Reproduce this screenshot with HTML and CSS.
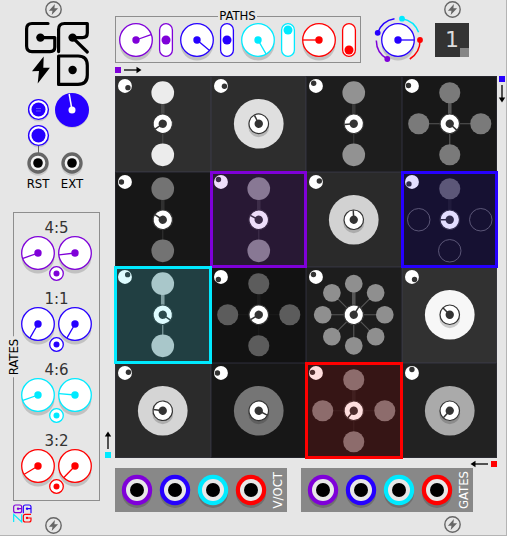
FILE: index.html
```html
<!DOCTYPE html>
<html lang="en">
<head>
<meta charset="utf-8">
<meta name="viewport" content="width=device-width, initial-scale=1">
<title>GRD</title>
<link rel="stylesheet" href="styles.css">
</head>
<body>
<svg class="defs" aria-hidden="true">
  <symbol id="screw" viewBox="-8.5 -8.5 17 17">
    <circle r="7.7" fill="none" stroke="#666" stroke-width="1.4"/>
    <path d="M1.4-5.6-4.6 1.2H-1L-1.8 5.6 4.6-1.2H.9Z" fill="#666"/>
  </symbol>
  <symbol id="dial-face" viewBox="-17 -17 34 34" overflow="visible">
    <circle cy="4" r="16.5" fill="#000" fill-opacity=".16"/>
    <circle r="16.3" fill="#fff" stroke="currentColor" stroke-width="1.3"/>
    <circle r="3.7" fill="currentColor"/>
  </symbol>
  <g id="needle"><path d="M0 0V-16" stroke="currentColor" stroke-width="1.3"/></g>
  <g id="flow"><path d="M0 1H6V7H0Z" fill="currentColor"/><path d="M9 4H23" stroke="#000" stroke-width="1.3"/><path d="M21.500 .8 26.500 4 21.500 7.200Z" fill="#000"/></g>
  <symbol id="jack" viewBox="-15 -15 30 30" overflow="visible">
    <circle cy="3" r="15" fill="#000" fill-opacity=".18"/>
    <circle r="15.2" fill="currentColor"/>
    <circle r="11" fill="#e8e8e8"/>
    <circle r="7" fill="#000"/>
  </symbol>
  <symbol id="input-jack" viewBox="-11 -11 22 22" overflow="visible">
    <circle cy="2" r="10.7" fill="#000" fill-opacity=".12"/>
    <circle r="9" fill="#f4f4f4" stroke="#666" stroke-width="3.300"/>
    <circle r="4.800" fill="#000"/>
  </symbol>
  <symbol id="push" viewBox="-10.5 -10.5 21 21" overflow="visible">
    <circle cy="1.500" r="10.500" fill="#000" fill-opacity=".12"/>
    <circle r="9.900" fill="#fff" stroke="currentColor" stroke-width="1.400"/>
    <circle r="7" fill="currentColor"/>
  </symbol>
  <symbol id="trim" viewBox="-7.5 -7.5 15 15" overflow="visible">
    <circle r="6.800" fill="#fff" stroke="currentColor" stroke-width="1.300"/>
    <circle r="3" fill="currentColor"/>
  </symbol>
  <g id="pair">
    <path class="link-wide" d="M0 0V-31"/><path class="link" d="M0 0V31"/>
    <g fill="currentColor"><circle cy="-31.200" r="11.400"/><circle cy="31.200" r="11.400"/></g>
  </g>
  <g id="quad">
    <path class="link-wide" d="M0 0V-31"/><path class="link" d="M-31 0H31M0 0V31"/>
    <g fill="currentColor"><circle cy="-31.200" r="10.600"/><circle cy="31.200" r="10.600"/><circle cx="-31.200" r="10.600"/><circle cx="31.200" r="10.600"/></g>
  </g>
  <g id="quad-one">
    <path class="link-wide" d="M0 0V-31"/>
    <circle cy="-31.200" r="10.600" fill="currentColor"/>
    <g fill="none" stroke="currentColor"><circle cy="31.200" r="11.300"/><circle cx="-31.200" r="11.300"/><circle cx="31.200" r="11.300"/></g>
  </g>
  <g id="octet">
    <path class="link-wide" d="M0 0V-31"/><path class="link" d="M-31 0H31M0 0V31M-22-22 22 22M22-22-22 22"/>
    <g fill="currentColor"><circle cy="-31.200" r="8.900"/><circle cy="31.200" r="8.900"/><circle cx="-31.200" r="8.900"/><circle cx="31.200" r="8.900"/><circle cx="-22" cy="-22" r="8.900"/><circle cx="22" cy="-22" r="8.900"/><circle cx="-22" cy="22" r="8.900"/><circle cx="22" cy="22" r="8.900"/></g>
  </g>
  <g id="disc">
    <circle r="25" fill="currentColor"/>
    <circle cy="3" r="10.500" fill="#000" fill-opacity=".18"/>
  </g>
  <g id="hub">
    <circle r="9.800" fill="#fff" stroke="#333" stroke-width="1.200"/>
    <circle r="4.200" fill="#333"/>
    <path d="M0 0V-9.500" stroke="#333" stroke-width="1.500"/>
  </g>
  <g id="eye"><circle cx="-38" cy="-38" r="7" fill="#fff"/></g>
</svg>

<main class="module">
  <aside class="side">
    <svg class="screw side-screw"><use href="#screw"/></svg>
    <svg class="logo" viewBox="24 21 66 66" role="img" aria-label="GRD">
      <g fill="none" stroke="#000" stroke-width="3.200" stroke-linecap="round" stroke-linejoin="round">
        <path d="M48 23.500H32Q26.600 23.500 26.600 29V46Q26.600 51.600 32 51.600H50Q54.800 51.600 54.800 47V37.600H40.500"/>
        <path d="M58.600 51.600V29.500Q58.600 23.500 64.500 23.500H87.300V33Q87.300 37.600 82.500 37.600H72.600L87.300 52"/>
        <path d="M58.600 56H78Q87.300 56 87.300 65.500V75Q87.300 84.400 78 84.400H58.600Z"/>
      </g>
      <circle cx="40.400" cy="37.600" r="4.200"/><circle cx="72.600" cy="37.600" r="4.200"/><circle cx="72.600" cy="70" r="4.200"/>
      <path d="M43.700 56.500 32 71.300 39 71 37.700 83.500 49.900 67.700H43.300Z"/>
    </svg>

    <div class="clock">
      <div class="buttons blue">
        <button type="button" class="push" aria-label="Run"><svg><use href="#push"/><path d="M8 9.500H13M8 12H13" stroke="#5a48ff"/></svg></button>
        <button type="button" class="push" aria-label="Reset"><svg><use href="#push"/></svg></button>
      </div>
      <label class="knob blue">
        <input type="range" aria-label="Clock rate" min="0" max="100" value="48">
        <svg viewBox="-17 -17 34 34"><circle cy="1" r="17" fill="#000" fill-opacity=".12"/><circle r="17" fill="currentColor"/><path d="M0 0-2.800-16" stroke="#fff" stroke-width="1.500"/><circle r="3.500" fill="#fff"/></svg>
      </label>
      <button type="button" class="input traced"><svg><use href="#input-jack"/></svg><span>RST</span></button>
      <button type="button" class="input"><svg><use href="#input-jack"/></svg><span>EXT</span></button>
    </div>

    <section class="rates" aria-labelledby="rates-title">
      <h2 id="rates-title" class="upright rates-title">RATES</h2>
      <div class="rate violet">
        <output>4:5</output>
        <div class="dials">
          <label class="knob"><input type="range" aria-label="Violet multiply" min="1" max="16" value="4"><svg viewBox="-17 -17 34 34"><use href="#dial-face" x="-17" y="-17" width="34" height="34"/><use href="#needle" transform="rotate(250)"/></svg></label>
          <label class="knob"><input type="range" aria-label="Violet divide" min="1" max="16" value="5"><svg viewBox="-17 -17 34 34"><use href="#dial-face" x="-17" y="-17" width="34" height="34"/><use href="#needle" transform="rotate(263)"/></svg></label>
        </div>
        <button type="button" class="trim" aria-label="Violet rate input"><svg><use href="#trim"/></svg></button>
      </div>
      <div class="rate blue">
        <output>1:1</output>
        <div class="dials">
          <label class="knob"><input type="range" aria-label="Blue multiply" min="1" max="16" value="1"><svg viewBox="-17 -17 34 34"><use href="#dial-face" x="-17" y="-17" width="34" height="34"/><use href="#needle" transform="rotate(210)"/></svg></label>
          <label class="knob"><input type="range" aria-label="Blue divide" min="1" max="16" value="1"><svg viewBox="-17 -17 34 34"><use href="#dial-face" x="-17" y="-17" width="34" height="34"/><use href="#needle" transform="rotate(210)"/></svg></label>
        </div>
        <button type="button" class="trim" aria-label="Blue rate input"><svg><use href="#trim"/></svg></button>
      </div>
      <div class="rate cyan">
        <output>4:6</output>
        <div class="dials">
          <label class="knob"><input type="range" aria-label="Cyan multiply" min="1" max="16" value="4"><svg viewBox="-17 -17 34 34"><use href="#dial-face" x="-17" y="-17" width="34" height="34"/><use href="#needle" transform="rotate(250)"/></svg></label>
          <label class="knob"><input type="range" aria-label="Cyan divide" min="1" max="16" value="6"><svg viewBox="-17 -17 34 34"><use href="#dial-face" x="-17" y="-17" width="34" height="34"/><use href="#needle" transform="rotate(275)"/></svg></label>
        </div>
        <button type="button" class="trim" aria-label="Cyan rate input"><svg><use href="#trim"/></svg></button>
      </div>
      <div class="rate red">
        <output>3:2</output>
        <div class="dials">
          <label class="knob"><input type="range" aria-label="Red multiply" min="1" max="16" value="3"><svg viewBox="-17 -17 34 34"><use href="#dial-face" x="-17" y="-17" width="34" height="34"/><use href="#needle" transform="rotate(239)"/></svg></label>
          <label class="knob"><input type="range" aria-label="Red divide" min="1" max="16" value="2"><svg viewBox="-17 -17 34 34"><use href="#dial-face" x="-17" y="-17" width="34" height="34"/><use href="#needle" transform="rotate(224)"/></svg></label>
        </div>
        <button type="button" class="trim" aria-label="Red rate input"><svg><use href="#trim"/></svg></button>
      </div>
    </section>

    <div class="footer">
      <svg class="maker" viewBox="0 0 57 57" role="img" aria-label="NANG" fill="none" stroke-width="3.500">
        <path class="violet" stroke="currentColor" d="M26 14H14M26 14V20Q26 26 20 26H8Q2 26 2 20V9Q2 3 8 3H20Q26 3 26 9V14"/>
        <path class="blue" stroke="currentColor" d="M31 28V9Q31 3 37 3H48Q54 3 54 9V28M42 14H54"/>
        <path class="cyan" stroke="currentColor" d="M2 54V31L26 54V31"/>
        <path class="red" stroke="currentColor" d="M54 31H37Q31 31 31 37V48Q31 54 37 54H48Q54 54 54 48V42H43"/>
        <circle cx="15" cy="14" r="3.500" fill="#7f00d9"/><circle cx="42" cy="14" r="3.500" fill="#2600ff"/><circle cx="42" cy="42" r="3.500" fill="#f00"/>
      </svg>
      <svg class="screw"><use href="#screw"/></svg>
    </div>
  </aside>

  <header class="top">
    <fieldset class="paths">
      <legend>PATHS</legend>
      <div class="path violet">
        <label class="knob"><input type="range" aria-label="Violet path" min="0" max="100" value="75"><svg viewBox="-17 -17 34 34"><use href="#dial-face" x="-17" y="-17" width="34" height="34"/><use href="#needle" transform="rotate(70)"/></svg></label>
        <label class="switch"><input type="range" aria-label="Violet direction" min="0" max="2" value="1"><svg viewBox="-7 -17 14 34"><rect x="-6.400" y="-16.400" width="12.800" height="32.800" rx="6.400"/><circle r="4.500"/></svg></label>
      </div>
      <div class="path blue">
        <label class="knob"><input type="range" aria-label="Blue path" min="0" max="100" value="95"><svg viewBox="-17 -17 34 34"><use href="#dial-face" x="-17" y="-17" width="34" height="34"/><use href="#needle" transform="rotate(130)"/></svg></label>
        <label class="switch"><input type="range" aria-label="Blue direction" min="0" max="2" value="1"><svg viewBox="-7 -17 14 34"><rect x="-6.400" y="-16.400" width="12.800" height="32.800" rx="6.400"/><circle r="4.500"/></svg></label>
      </div>
      <div class="path cyan">
        <label class="knob"><input type="range" aria-label="Cyan path" min="0" max="100" value="100"><svg viewBox="-17 -17 34 34"><use href="#dial-face" x="-17" y="-17" width="34" height="34"/><use href="#needle" transform="rotate(150)"/></svg></label>
        <label class="switch"><input type="range" aria-label="Cyan direction" min="0" max="2" value="2"><svg viewBox="-7 -17 14 34"><rect x="-6.400" y="-16.400" width="12.800" height="32.800" rx="6.400"/><circle cy="-10" r="4.500"/></svg></label>
      </div>
      <div class="path red">
        <label class="knob"><input type="range" aria-label="Red path" min="0" max="100" value="20"><svg viewBox="-17 -17 34 34"><use href="#dial-face" x="-17" y="-17" width="34" height="34"/><use href="#needle" transform="rotate(270)"/></svg></label>
        <label class="switch"><input type="range" aria-label="Red direction" min="0" max="2" value="0"><svg viewBox="-7 -17 14 34"><rect x="-6.400" y="-16.400" width="12.800" height="32.800" rx="6.400"/><circle cy="10" r="4.500"/></svg></label>
      </div>
    </fieldset>
    <label class="knob offset blue">
      <input type="range" aria-label="Rotation" min="0" max="100" value="80">
      <svg viewBox="-17 -17 34 34">
        <use href="#dial-face" x="-17" y="-17" width="34" height="34"/><use href="#needle" transform="rotate(90)"/>
        <g fill="none" stroke-width="1.500">
          <path d="M-20.300-7.200A21.600 21.600 0 0 1-3.500-21.300" stroke="#2600ff"/>
          <path d="M4-21.300A21.600 21.600 0 0 1 20.600-7.800" stroke="#00eaff"/>
          <path d="M22 0A22 22 0 0 1 11.800 19" stroke="#f00"/>
          <path d="M-10.700 19A21.700 21.700 0 0 1-21.700 .4" stroke="#7f00d9"/>
        </g>
        <circle cx="-20.300" cy="-7.200" r="2.900" fill="#2600ff"/><circle cx="4" cy="-21.300" r="2.900" fill="#00eaff"/>
        <circle cx="22" r="2.900" fill="#f00"/><circle cx="-10.700" cy="19" r="2.900" fill="#7f00d9"/>
      </svg>
    </label>
    <div class="scene">
      <svg class="screw"><use href="#screw"/></svg>
      <button type="button" class="display" aria-label="Scene">1</button>
    </div>
  </header>

  <svg class="flow flow-right violet" viewBox="0 0 27 8"><use href="#flow"/></svg>
  <svg class="flow flow-down blue" viewBox="0 0 8 27"><use href="#flow" transform="translate(8 0) rotate(90)"/></svg>
  <svg class="flow flow-up cyan" viewBox="0 0 8 27"><use href="#flow" transform="translate(0 27) rotate(-90)"/></svg>
  <svg class="flow flow-left red" viewBox="0 0 27 8"><use href="#flow" transform="translate(27 8) rotate(180)"/></svg>

  <section class="cells" aria-label="Steps">
    <button type="button" class="cell" aria-label="Step 1" style="--level:236;--link:.13"><svg viewBox="-48 -48 96 96"><use href="#pair"/><use href="#hub" transform="rotate(235)"/><use href="#eye"/><circle cx="-35" cy="-36.300" r="2.700"/></svg></button>
    <button type="button" class="cell" aria-label="Step 2" style="--level:223;--link:0"><svg viewBox="-48 -48 96 96"><use href="#disc"/><use href="#hub" transform="rotate(333)"/><use href="#eye"/><circle cx="-34.500" cy="-37.700" r="2.700"/></svg></button>
    <button type="button" class="cell" aria-label="Step 3" style="--level:146;--link:.12"><svg viewBox="-48 -48 96 96"><use href="#pair"/><use href="#hub" transform="rotate(266)"/><use href="#eye"/><circle cx="-40.300" cy="-40.700" r="2.700"/></svg></button>
    <button type="button" class="cell" aria-label="Step 4" style="--level:122;--link:.27"><svg viewBox="-48 -48 96 96"><use href="#quad"/><use href="#hub" transform="rotate(132)"/><use href="#eye"/><circle cx="-41.500" cy="-38.500" r="2.700"/></svg></button>

    <button type="button" class="cell" aria-label="Step 5" style="--level:115;--link:.11"><svg viewBox="-48 -48 96 96"><use href="#pair"/><use href="#hub" transform="rotate(303)"/><use href="#eye"/><circle cx="-41.500" cy="-38" r="2.700"/></svg></button>
    <button type="button" class="cell active violet-step" aria-label="Step 6" style="--level:138;--link:.11"><svg viewBox="-48 -48 96 96"><use href="#pair"/><use href="#hub" transform="rotate(297)"/><use href="#eye"/><circle cx="-40.500" cy="-40.500" r="2.700"/></svg></button>
    <button type="button" class="cell" aria-label="Step 7" style="--level:210;--link:0"><svg viewBox="-48 -48 96 96"><use href="#disc"/><use href="#hub" transform="rotate(357)"/><use href="#eye"/><circle cx="-34.600" cy="-39" r="2.700"/></svg></button>
    <button type="button" class="cell active blue-step" aria-label="Step 8" style="--level:100;--link:.05"><svg viewBox="-48 -48 96 96"><use href="#quad-one"/><use href="#hub" transform="rotate(270)"/><use href="#eye"/><circle cx="-41" cy="-36" r="2.700"/></svg></button>

    <button type="button" class="cell active cyan-step" aria-label="Step 9" style="--level:195;--link:.5"><svg viewBox="-48 -48 96 96"><use href="#pair"/><use href="#hub" transform="rotate(125)"/><use href="#eye"/><circle cx="-35.300" cy="-40.300" r="2.700"/></svg></button>
    <button type="button" class="cell" aria-label="Step 10" style="--level:92;--link:.04"><svg viewBox="-48 -48 96 96"><use href="#quad"/><use href="#hub" transform="rotate(239)"/><use href="#eye"/><circle cx="-40.600" cy="-35.400" r="2.700"/></svg></button>
    <button type="button" class="cell" aria-label="Step 11" style="--level:143;--link:.25"><svg viewBox="-48 -48 96 96"><use href="#octet"/><use href="#hub" transform="rotate(33)"/><use href="#eye"/><circle cx="-40.500" cy="-40.500" r="2.700"/></svg></button>
    <button type="button" class="cell" aria-label="Step 12" style="--level:247;--link:0"><svg viewBox="-48 -48 96 96"><use href="#disc"/><use href="#hub" transform="rotate(315)"/><use href="#eye"/><circle cx="-35.400" cy="-35.400" r="2.700"/></svg></button>

    <button type="button" class="cell" aria-label="Step 13" style="--level:213;--link:0"><svg viewBox="-48 -48 96 96"><use href="#disc"/><use href="#hub" transform="rotate(277)"/><use href="#eye"/><circle cx="-34.500" cy="-38.700" r="2.700"/></svg></button>
    <button type="button" class="cell" aria-label="Step 14" style="--level:117;--link:0"><svg viewBox="-48 -48 96 96"><use href="#disc"/><use href="#hub" transform="rotate(117)"/><use href="#eye"/><circle cx="-41.500" cy="-38" r="2.700"/></svg></button>
    <button type="button" class="cell active red-step" aria-label="Step 15" style="--level:124;--link:.05"><svg viewBox="-48 -48 96 96"><use href="#quad"/><use href="#hub" transform="rotate(220)"/><use href="#eye"/><circle cx="-41.500" cy="-38.600" r="2.700"/></svg></button>
    <button type="button" class="cell" aria-label="Step 16" style="--level:170;--link:0"><svg viewBox="-48 -48 96 96"><use href="#disc"/><use href="#hub" transform="rotate(223)"/><use href="#eye"/><circle cx="-38" cy="-41.500" r="2.700"/></svg></button>
  </section>

  <footer class="outputs">
    <section class="bank" aria-labelledby="voct">
      <button type="button" class="jack violet" aria-label="Violet V/OCT"><svg><use href="#jack"/></svg></button>
      <button type="button" class="jack blue" aria-label="Blue V/OCT"><svg><use href="#jack"/></svg></button>
      <button type="button" class="jack cyan" aria-label="Cyan V/OCT"><svg><use href="#jack"/></svg></button>
      <button type="button" class="jack red" aria-label="Red V/OCT"><svg><use href="#jack"/></svg></button>
      <h2 id="voct" class="upright">V/OCT</h2>
    </section>
    <section class="bank" aria-labelledby="gates">
      <button type="button" class="jack violet" aria-label="Violet gate"><svg><use href="#jack"/></svg></button>
      <button type="button" class="jack blue" aria-label="Blue gate"><svg><use href="#jack"/></svg></button>
      <button type="button" class="jack cyan" aria-label="Cyan gate"><svg><use href="#jack"/></svg></button>
      <button type="button" class="jack red" aria-label="Red gate"><svg><use href="#jack"/></svg></button>
      <h2 id="gates" class="upright">GATES</h2>
    </section>
  </footer>
  <svg class="screw corner-screw"><use href="#screw"/></svg>
</main>
</body>
</html>
```

FILE: styles.css
```css
:root {
  --panel: #e6e6e6;
  --violet: #7f00d9;
  --blue: #2600ff;
  --cyan: #00eaff;
  --red: #ff0000;
}

* {
  box-sizing: border-box;
}

body {
  margin: 0;
  background: var(--panel);
  color: #000;
  font: 13px/14px "DejaVu Sans Condensed", "Noto Sans", sans-serif;
}

button {
  margin: 0;
  padding: 0;
  border: 0;
  background: none;
  color: inherit;
  font: inherit;
}

svg {
  display: block;
  overflow: visible;
}

h2 {
  margin: 0;
  font: inherit;
}

.defs {
  position: absolute;
  width: 0;
  height: 0;
  overflow: hidden;
}

.violet { color: var(--violet); }
.blue { color: var(--blue); }
.cyan { color: var(--cyan); }
.red { color: var(--red); }

.module {
  display: grid;
  grid-template-columns: 101px 14px minmax(0, 1fr) 9px;
  grid-template-rows: 64px 12px auto 10px auto 1fr;
  min-height: 100vh;
  border-right: 1px solid #b4b4b4;
  border-bottom: 1px solid #b4b4b4;
}

.screw {
  width: 17px;
  height: 17px;
  flex: none;
}

/* Left column */
.side {
  grid-column: 1;
  grid-row: 1 / -1;
  padding: 1px 1px 0 13px;
}

.side-screw {
  margin-left: 32px;
}

.logo {
  width: 66px;
  height: 66px;
  margin: 3px auto 6px;
}

.clock {
  display: grid;
  grid-template-columns: 34px 34px;
  justify-content: center;
  margin: 0 3px 21px 0;
}

.buttons {
  display: flex;
  flex-direction: column;
  align-items: center;
  gap: 5px;
  padding: 6px 0;
}

.push,
.push svg {
  display: block;
  width: 21px;
  height: 21px;
}

.input {
  position: relative;
  display: flex;
  flex-direction: column;
  align-items: center;
  gap: 3px;
}

.input svg {
  width: 22px;
  height: 22px;
}

.traced::before {
  content: "";
  position: absolute;
  top: -6px;
  left: 50%;
  width: 1px;
  height: 8px;
  background: #666;
}

.knob,
.switch {
  position: relative;
  display: block;
  flex: none;
  width: 34px;
  height: 34px;
}

.switch {
  width: 14px;
}

.knob input,
.switch input {
  position: absolute;
  inset: 0;
  z-index: 1;
  width: 100%;
  height: 100%;
  margin: 0;
  opacity: 0;
}

.knob svg,
.switch svg {
  width: 100%;
  height: 100%;
}

.switch rect {
  fill: #fff;
  stroke: currentColor;
  stroke-width: 1.3px;
}

.switch circle {
  fill: currentColor;
}

.rates {
  position: relative;
  display: flex;
  flex-direction: column;
  gap: 10px;
  padding: 7px 0 6px;
  border: 1px solid #8e8e8e;
}

.upright {
  writing-mode: vertical-rl;
  transform: rotate(180deg);
}

.rates-title {
  position: absolute;
  top: 50%;
  left: 0;
  padding: 2px 0;
  background: var(--panel);
  transform: translate(-50%, -50%) rotate(180deg);
}

.rate {
  display: flex;
  flex-direction: column;
  align-items: center;
}

.rate output {
  color: #333;
  font: 15px/16px "DejaVu Sans", sans-serif;
}

.dials {
  display: flex;
  gap: 3px;
}

.trim {
  position: relative;
  margin-top: -4px;
}

.trim svg {
  width: 15px;
  height: 15px;
}

.footer {
  display: flex;
  gap: 13px;
  padding-top: 3px;
}

.footer .screw {
  margin-top: 13px;
}

.maker {
  width: 19px;
  height: 19px;
}

/* Top row */
.top {
  grid-column: 3 / -1;
  grid-row: 1;
  display: flex;
  align-items: flex-start;
  gap: 20px;
}

.paths {
  display: flex;
  gap: 7px;
  min-width: 0;
  margin: 9px 0 0;
  padding: 0 4px 5px 3px;
  border: 1px solid #8e8e8e;
}

.paths legend {
  margin: 0 auto;
  padding: 0 1px;
}

.path {
  display: flex;
  gap: 6px;
}

.offset {
  margin-top: 23px;
}

.scene {
  display: flex;
  flex-direction: column;
  align-items: center;
  gap: 5px;
  padding-top: 1px;
}

.display {
  width: 34px;
  height: 34px;
  background:
    linear-gradient(#858585, #858585) right bottom / 9px 9px no-repeat,
    #333;
  color: #ddd;
  font: 22px/34px "DejaVu Sans", sans-serif;
}

/* Direction markers */
.flow {
  width: 27px;
  height: 8px;
}

.flow-right {
  grid-column: 3;
  grid-row: 2;
  align-self: center;
}

.flow-down,
.flow-up {
  width: 8px;
  height: 27px;
  justify-self: center;
}

.flow-down {
  grid-column: 4;
  grid-row: 3;
}

.flow-up {
  grid-column: 2;
  grid-row: 3;
  align-self: end;
}

.flow-left {
  grid-column: 3;
  grid-row: 4;
  align-self: end;
  justify-self: end;
}

/* Step matrix */
.cells {
  grid-column: 3;
  grid-row: 3;
  display: grid;
  grid-template-columns: repeat(4, 1fr);
  aspect-ratio: 1;
  outline: 1px solid #4c4c54;
  outline-offset: -1px;
}

.cell {
  position: relative;
  aspect-ratio: 1;
  background: rgb(calc(var(--level) / 5) calc(var(--level) / 5) calc(var(--level) / 5));
  box-shadow: inset 0 0 0 1px rgba(70, 70, 100, 0.25);
  color: rgb(var(--level) var(--level) var(--level));
}

.cell svg {
  width: 100%;
  height: 100%;
  fill: #333;
}

.link,
.link-wide {
  fill: none;
  stroke: #fff;
  stroke-opacity: var(--link);
  stroke-width: 1.2px;
}

.link-wide {
  stroke-width: 3.6px;
}

.active {
  z-index: 1;
}

.active::after {
  content: "";
  position: absolute;
  inset: -1px;
  border: 3px solid var(--tone);
  background: color-mix(in srgb, var(--tone) 13%, transparent);
}

.violet-step { --tone: var(--violet); }
.blue-step { --tone: var(--blue); }
.cyan-step { --tone: var(--cyan); }
.red-step { --tone: var(--red); }

/* Bottom row */
.outputs {
  grid-column: 3;
  grid-row: 5;
  display: flex;
  gap: 14px;
}

.bank {
  display: flex;
  align-items: center;
  gap: 8px;
  height: 44px;
  padding: 0 2px 0 7px;
  background: #888;
}

.jack,
.jack svg {
  display: block;
  width: 30px;
  height: 30px;
}

.bank .upright {
  margin-left: -3px;
  color: #fff;
}

.corner-screw {
  grid-column: 3;
  grid-row: 6;
  justify-self: end;
  margin: 4px 36px 0 0;
}
```
